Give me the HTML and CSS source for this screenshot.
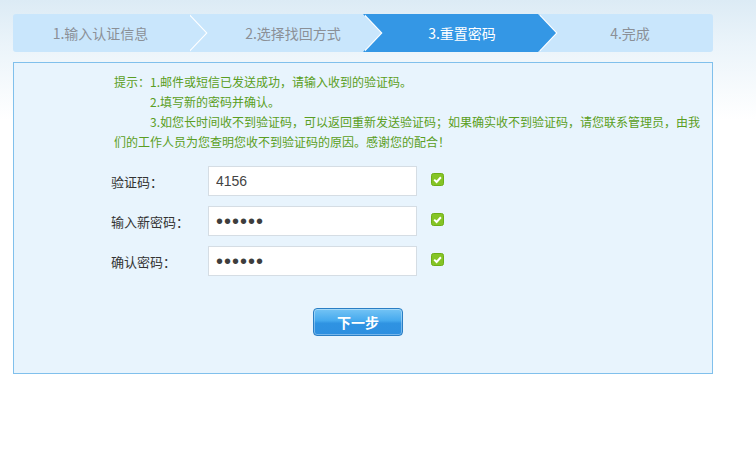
FILE: index.html
```html
<!DOCTYPE html>
<html lang="zh-CN">
    <head>
        <meta charset="UTF-8">
        <meta name="viewport" content="width=device-width, initial-scale=1.0">
        <title>找回密码 - 重置密码</title>
        <link rel="stylesheet" href="styles.css">
    </head>
    <body>
        <div class="wrap">
            <ol class="steps">
                <li class="step step-1">1.输入认证信息</li>
                <li class="step step-2">2.选择找回方式</li>
                <li class="step step-3 step-active">3.重置密码</li>
                <li class="step step-4 step-last">4.完成</li>
            </ol>
            <section class="panel">
                <p class="tips"><span class="tips-label">提示：</span>1.邮件或短信已发送成功，请输入收到的验证码。<br><span class="tips-indent"></span>2.填写新的密码并确认。<br><span class="tips-indent"></span>3.如您长时间收不到验证码，可以返回重新发送验证码；如果确实收不到验证码，请您联系管理员，由我们的工作人员为您查明您收不到验证码的原因。感谢您的配合！</p>
                <form class="reset-form">
                    <div class="form-row">
                        <label class="form-label" for="code">验证码：</label>
                        <input class="form-input" type="text" id="code" value="4156">
                        <svg class="check" width="13" height="13" viewBox="0 0 13 13"><rect x="0.5" y="0.5" width="12" height="12" rx="2" fill="#85c425" stroke="#6eae17"/><path d="M3.2 6.6 L5.6 9 L9.9 4.3" fill="none" stroke="#fff" stroke-width="2"/></svg>
                    </div>
                    <div class="form-row">
                        <label class="form-label" for="new-pass">输入新密码：</label>
                        <input class="form-input form-pass" type="password" id="new-pass" value="123456">
                        <svg class="check" width="13" height="13" viewBox="0 0 13 13"><rect x="0.5" y="0.5" width="12" height="12" rx="2" fill="#85c425" stroke="#6eae17"/><path d="M3.2 6.6 L5.6 9 L9.9 4.3" fill="none" stroke="#fff" stroke-width="2"/></svg>
                    </div>
                    <div class="form-row">
                        <label class="form-label" for="re-pass">确认密码：</label>
                        <input class="form-input form-pass" type="password" id="re-pass" value="123456">
                        <svg class="check" width="13" height="13" viewBox="0 0 13 13"><rect x="0.5" y="0.5" width="12" height="12" rx="2" fill="#85c425" stroke="#6eae17"/><path d="M3.2 6.6 L5.6 9 L9.9 4.3" fill="none" stroke="#fff" stroke-width="2"/></svg>
                    </div>
                    <div class="form-actions">
                        <button type="button" class="btn-next">下一步</button>
                    </div>
                </form>
            </section>
        </div>
    </body>
</html>
```

FILE: styles.css
```css
body {
    margin: 0;
    font-family: "Noto Sans CJK SC", sans-serif;
    background: #fff linear-gradient(to bottom, #dcebf5 0, #ebf4fa 45px, #fff 120px) no-repeat;
    min-height: 457px;
}
.wrap {
    width: 700px;
    margin-left: 13px;
    padding-top: 14px;
}
.steps {
    list-style: none;
    margin: 0 0 10px 0;
    padding: 0;
    display: flex;
    height: 38px;
    border-radius: 3px;
    overflow: hidden;
}
.step {
    flex: 0 0 175px;
    box-sizing: border-box;
    position: relative;
    background: #c9e6fc;
    color: #8b9097;
    font-size: 14px;
    line-height: 38px;
    text-align: center;
}
.step-2 {
    padding-left: 35px;
}
.step-3 {
    padding-left: 23px;
}
.step-4 {
    padding-left: 9px;
}
.step-active {
    background: #3497e5;
    color: #fff;
}
/* arrow pointing into the next step, with a thin white edge */
.step:not(.step-last)::before,
.step:not(.step-last)::after {
    content: "";
    position: absolute;
    top: 0;
    width: 18px;
    height: 38px;
    clip-path: polygon(0 0, 100% 50%, 0 100%);
}
.step:not(.step-last)::before {
    left: calc(100% + 1.5px);
    background: #fff;
    z-index: 1;
}
.step:not(.step-last)::after {
    left: 100%;
    background: inherit;
    z-index: 2;
}
.panel {
    border: 1px solid #80c0ec;
    background-color: #e8f4fd;
    padding: 9px 0 37px 0;
}
.tips {
    margin: 0 0 14px 100px;
    width: 592px;
    font-size: 12px;
    line-height: 20px;
    color: #5a9e22;
}
.tips-label,
.tips-indent {
    display: inline-block;
    width: 36px;
}
.reset-form {
    margin-left: 97px;
}
.form-row {
    display: flex;
    align-items: center;
    height: 30px;
    margin-bottom: 10px;
}
.form-label {
    width: 97px;
    font-size: 13px;
    color: #333;
}
.form-input {
    box-sizing: border-box;
    width: 209px;
    height: 30px;
    padding: 0 7px;
    border: 1px solid #d5dde4;
    background: #fff;
    font-family: "Liberation Sans", Arial, sans-serif;
    font-size: 14px;
    color: #444;
    outline: none;
}
.form-pass {
    font-size: 20px;
    letter-spacing: 1px;
    color: #3d3d3d;
}
.check {
    margin-left: 14px;
    margin-top: -3px;
}
.form-actions {
    padding-left: 202px;
    margin-top: 32px;
}
.btn-next {
    width: 90px;
    height: 28px;
    border: 1px solid #2a7ec4;
    border-radius: 4px;
    background: linear-gradient(to bottom, #74c4f5 0, #45a9ee 45%, #2f93e2 55%, #2d8fe0 100%);
    box-shadow: inset 0 0 0 1px rgba(255, 255, 255, 0.35);
    color: #fff;
    font-family: "Noto Sans CJK SC", sans-serif;
    font-size: 14px;
    font-weight: bold;
    cursor: pointer;
}
.btn-next:hover {
    background: #2d8fe0;
}
```
